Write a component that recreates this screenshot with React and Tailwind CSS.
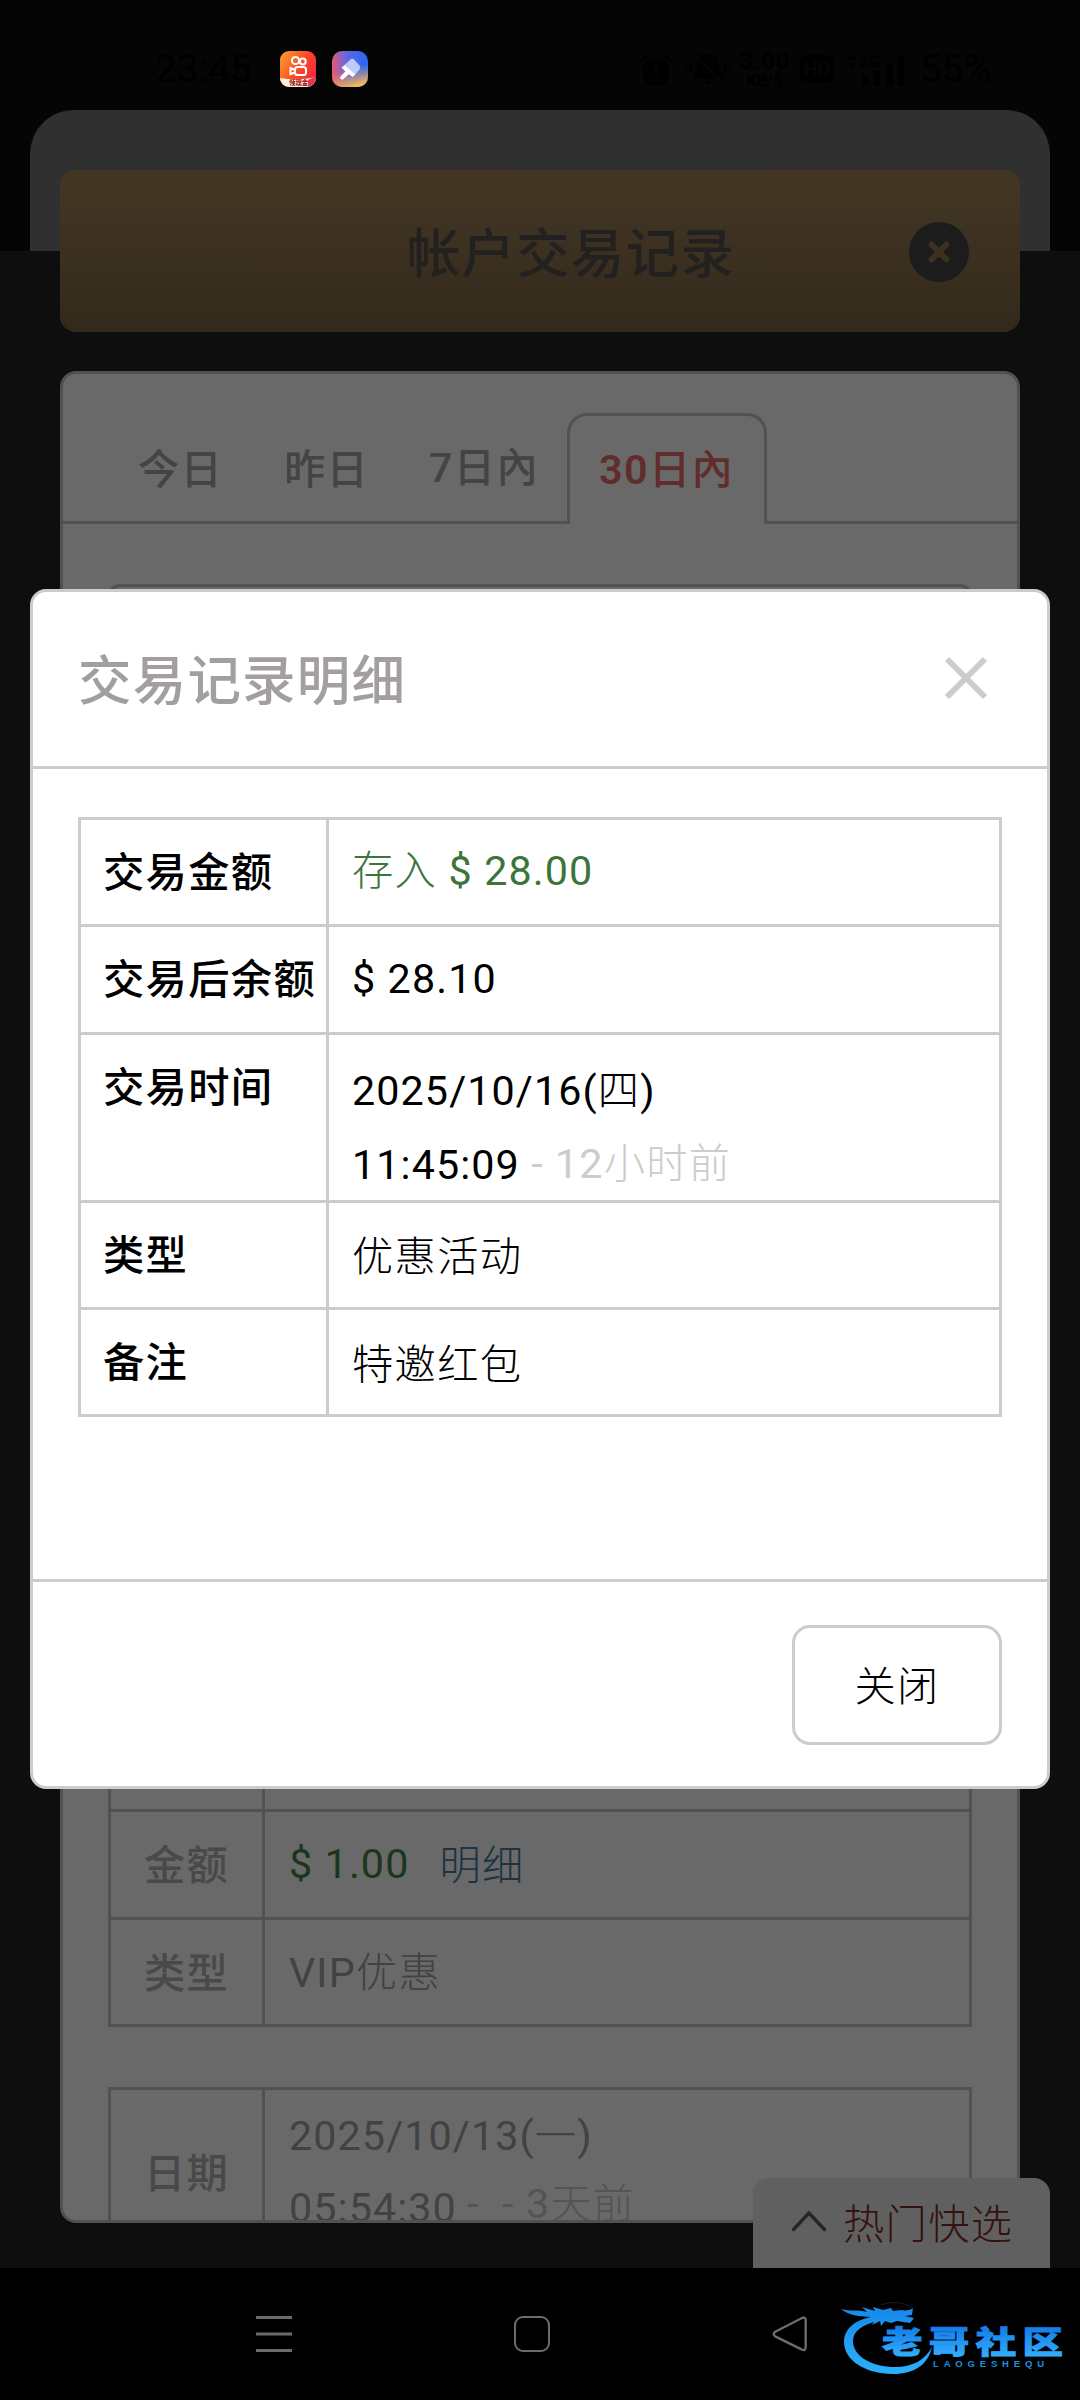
import React from 'react';

const Thin = ({ children }) => (
  <span className="font-['Noto_Sans_CJK_SC',sans-serif] font-light tracking-[1.375px]">{children}</span>
);

const StatusBar = () => (
  <div className="relative h-[170px] shrink-0 flex items-start pl-[155px] pr-[88px] pt-[50px] text-black">
    <div className="w-[125px] h-[38px] flex items-center text-[38px] leading-none tracking-[0.5px]">23:45</div>

    {/* Notification icons */}
    <div className="flex gap-4">
      <svg className="w-9 h-[37px]" viewBox="0 0 36 37">
        <defs>
          <linearGradient id="kwai" x1="0" y1="0" x2="1" y2="0.6">
            <stop offset="0" stopColor="#ffa22e" />
            <stop offset="0.6" stopColor="#fb4a24" />
            <stop offset="1" stopColor="#f4283c" />
          </linearGradient>
          <clipPath id="kwaiClip">
            <rect y="1" width="36" height="36" rx="9" />
          </clipPath>
        </defs>
        <g clipPath="url(#kwaiClip)">
          <rect y="1" width="36" height="36" fill="url(#kwai)" />
          <path d="M0 28 Q18 31 36 27 V37 H0Z" fill="#fff0e2" />
          <path d="M28 30 L36 26 V37 H28Z" fill="#e23a4a" />
          <g fill="none" stroke="#fff" strokeWidth="2">
            <circle cx="15.5" cy="10.5" r="3.6" />
            <circle cx="22.8" cy="11.5" r="2.9" />
            <rect x="15" y="17" width="11" height="8" rx="2.6" />
            <path d="M15 20 L10.5 18 V24 L15 22.5" />
          </g>
          <text x="9" y="35.3" fontSize="6.4" fontWeight="900" fill="#a31d16" fontFamily="Noto Sans CJK SC">领现金</text>
        </g>
      </svg>
      <svg className="w-9 h-[37px]" viewBox="0 0 36 37">
        <defs>
          <linearGradient id="brushBg" x1="0" y1="0.3" x2="1" y2="0.2">
            <stop offset="0" stopColor="#e25a7c" />
            <stop offset="0.45" stopColor="#5a68e6" />
            <stop offset="1" stopColor="#2468f5" />
          </linearGradient>
          <linearGradient id="brushGlow" x1="0.4" y1="0.35" x2="0.6" y2="1">
            <stop offset="0.25" stopColor="#f0a050" stopOpacity="0" />
            <stop offset="1" stopColor="#f2bd55" />
          </linearGradient>
        </defs>
        <rect y="1" width="36" height="36" rx="10" fill="url(#brushBg)" />
        <rect y="1" width="36" height="36" rx="10" fill="url(#brushGlow)" />
        <path d="M12.5 15 L18.5 9.5 Q20.5 8 22.5 10 L27.5 15.5 Q29 17.5 27.5 19.5 L23 25Z" fill="#b9ccfc" />
        <path d="M9.5 17.5 L12.8 15 L23.2 24.6 L20.8 27 L16.8 24.2 L11.5 29 Q9 30.5 8.2 28 Q8 26.8 9 26 L13.3 21.6Z" fill="#fff" />
      </svg>
    </div>

    <div className="ml-auto flex items-center h-[38px] text-black">
      <svg className="w-8 h-9" viewBox="0 0 32 36">
        <circle cx="16" cy="21" r="14" fill="#000" />
        <path d="M2 9 L8 4 M30 9 L24 4" stroke="#000" strokeWidth="3" />
        <path d="M16 14 V22 L20 24" fill="none" stroke="#050505" strokeWidth="2.5" />
      </svg>
      <svg className="ml-3 w-12 h-9" viewBox="0 0 48 36">
        <path d="M24 2 C15 4 13 10 13 17 L9 28 H39 L35 17 C35 10 33 4 24 2Z M20 30 H28 L24 34Z" fill="#000" />
        <path d="M7 12 V22 M2 14 V20 M41 12 V22 M46 14 V20" stroke="#000" strokeWidth="2.5" />
        <path d="M9 3 L39 32" stroke="#050505" strokeWidth="3" />
        <path d="M12 2 L41 30" stroke="#000" strokeWidth="2.5" />
      </svg>
      <div className="ml-2 w-[50px] flex flex-col items-center font-bold">
        <span className="text-[24px] leading-[24px] tracking-[0.5px]">3.00</span>
        <span className="text-[16px] leading-[16px]">KB/S</span>
      </div>
      <div className="ml-2.5 w-[34px] h-7 rounded-md bg-black text-[#050505] text-[20px] font-bold flex items-center justify-center">HD</div>
      <svg className="ml-3 w-[60px] h-9" viewBox="0 0 60 36">
        <text x="13" y="16" fontSize="17" fontWeight="700" fontFamily="Roboto">5G</text>
        <path d="M0 9 L5 3 L10 9Z M0 12 L5 18 L10 12Z" />
        <path d="M16 24 H22 V35 H16Z M27 19 H34 V35 H27Z M40 12 H47 V35 H40Z M52 4 H58 V35 H52Z" />
      </svg>
      <span className="ml-3.5 text-[38px] leading-none tracking-[0.5px]">55%</span>
    </div>
  </div>
);

const Banner = () => (
  <div className="relative mx-[60px] h-[162px] shrink-0 rounded-2xl bg-linear-to-b from-[#433724] via-[#3c3121] to-[#33291a] flex items-center justify-center">
    <h1 className="pl-[62px] pt-[7px] text-[53.5px] leading-none tracking-[1.2px] font-medium text-[#222120]">帐户交易记录</h1>
    <div className="absolute right-[51px] top-[52px] size-[60px] rounded-full bg-[#1c1c1c] flex items-center justify-center">
      <svg className="size-[24px]" viewBox="0 0 24 24" stroke="#3c3121" strokeWidth="6" strokeLinecap="round">
        <path d="M4.5 4.5 L19.5 19.5 M19.5 4.5 L4.5 19.5" />
      </svg>
    </div>
  </div>
);

const Tabs = () => (
  <div className="h-[150px] shrink-0 flex items-end text-[41.25px] leading-none tracking-[1.375px] font-medium text-[#444]">
    <div className="w-[45px] h-[111px] border-b-3 border-[#515151]" />
    <div className="w-[146px] h-[111px] border-b-3 border-[#515151] pl-[30px] pt-[37px]">今日</div>
    <div className="w-[146px] h-[111px] border-b-3 border-[#515151] pl-[30px] pt-[37px]">昨日</div>
    <div className="w-[167px] h-[111px] border-b-3 border-[#515151] pl-[29px] pt-[35px] whitespace-nowrap">7日內</div>
    <div className="w-[200px] h-[111px] border-x-3 border-t-3 border-[#515151] rounded-t-[20px] pl-[29px] pt-[34px] text-[#602d2c] whitespace-nowrap">
      <span className="font-semibold">30</span>日內
    </div>
    <div className="flex-1 h-[111px] border-b-3 border-[#515151]" />
  </div>
);

const RecordRow = ({ label, children, className }) => (
  <div className={`flex border-b-3 border-[#515151] ${className}`}>
    <div className="w-[154px] border-r-3 border-[#515151] pt-[5px] flex items-center justify-center font-medium text-[#494949]">{label}</div>
    <div className="flex-1 flex items-center pl-[24px] tracking-[1.1px] text-[#424242] whitespace-pre">{children}</div>
  </div>
);

const HistoryCard = () => (
  <div className="relative mx-[60px] mt-[39px] h-[1852px] shrink-0 rounded-2xl border-3 border-[#515151] bg-[#696969] overflow-hidden flex flex-col">
    <Tabs />
    <div className="mx-[45px] mt-[60px] h-[107px] shrink-0 rounded-xl border-3 border-[#515151]" />
    <div className="mx-[45px] mt-[951px] shrink-0 border-3 border-b-0 border-[#515151] text-[41.25px] leading-none tracking-[1.375px]">
      <RecordRow label="日期" className="h-[167px]" />
      <RecordRow label="金额" className="h-[108px]">
        <span className="pt-px text-[#1b361b]">$ 1.00</span>
        <span className="ml-[30px] pt-px text-[#1d3341]"><Thin>明细</Thin></span>
      </RecordRow>
      <RecordRow label="类型" className="h-[107px]">
        <span>VIP<Thin>优惠</Thin></span>
      </RecordRow>
    </div>
    <div className="mx-[45px] mt-[60px] shrink-0 border-3 border-b-0 border-[#515151] text-[41.25px] tracking-[1.375px]">
      <RecordRow label="日期" className="h-[167px]">
        <div className="mb-[9px] leading-[72px]">
          <div className="h-[72px]">2025/10/13(<Thin>一</Thin>)</div>
          <div className="h-[72px]">
            05:54:30<span className="relative -top-[4px] ml-[10px] text-[#545454]">-  - 3<Thin>天前</Thin></span>
          </div>
        </div>
      </RecordRow>
    </div>
  </div>
);

const QuickPick = () => (
  <div className="absolute right-[30px] bottom-[132px] w-[297px] h-[90px] rounded-t-2xl bg-[#606060] flex items-center pl-[38px]">
    <svg className="w-9 h-[22px] -mt-1" viewBox="0 0 36 22" fill="none" stroke="#262626" strokeWidth="3.4" strokeLinecap="round">
      <path d="M2.5 19.5 L18 3 L33.5 19.5" />
    </svg>
    <span className="ml-4 pt-[2px] text-[41.25px] leading-none text-[#371010]"><Thin>热门快选</Thin></span>
  </div>
);

const DetailRow = ({ label, children, className, valueClass }) => (
  <div className={`flex border-b-3 border-[#ccc] last:border-b-0 ${className}`}>
    <div className="w-[248px] border-r-3 border-[#ccc] pl-[22px] pt-[33px] font-medium whitespace-nowrap">{label}</div>
    <div className={`flex-1 pl-[23px] tracking-[1.1px] whitespace-pre ${valueClass}`}>{children}</div>
  </div>
);

const DetailModal = () => (
  <div className="absolute left-[30px] top-[589px] w-[1020px] h-[1200px] rounded-2xl border-3 border-[#ccc] bg-white flex flex-col">
    <div className="h-[177px] shrink-0 border-b-3 border-[#ccc] flex items-center justify-between pl-[45px] pr-[59px]">
      <h2 className="pt-[5px] text-[53.5px] leading-none tracking-[1.2px] font-medium text-[#a39f9f]">交易记录明细</h2>
      <svg className="size-[44px] -mt-[2px]" viewBox="0 0 44 44" stroke="#ccc" strokeWidth="6">
        <path d="M3 3 L41 41 M41 3 L3 41" />
      </svg>
    </div>

    <div className="flex-1 px-[45px] pt-[48px]">
      <div className="border-3 border-[#ccc] text-[41.25px] leading-none tracking-[1.375px] text-black">
        <DetailRow label="交易金额" className="h-[107px]" valueClass="pt-[27px]">
          <span className="text-[#3c743c]"><Thin>存入</Thin> $ 28.00</span>
        </DetailRow>
        <DetailRow label="交易后余额" className="h-[108px]" valueClass="pt-[32px]">$ 28.10</DetailRow>
        <DetailRow label="交易时间" className="h-[168px]" valueClass="pt-[16px] leading-[73px]">
          <div className="h-[74px]">2025/10/16(<Thin>四</Thin>)</div>
          <div className="h-[73px]">11:45:09<span className="relative -top-px text-[#ccc]"> - 12<Thin>小时前</Thin></span></div>
        </DetailRow>
        <DetailRow label="类型" className="h-[107px]" valueClass="pt-[30px]"><Thin>优惠活动</Thin></DetailRow>
        <DetailRow label="备注" className="h-[104px]" valueClass="pt-[31px]"><Thin>特邀红包</Thin></DetailRow>
      </div>
    </div>

    <div className="h-[207px] shrink-0 border-t-3 border-[#ccc] flex justify-end pt-[43px] pr-[45px]">
      <button className="w-[210px] h-[120px] pt-[2px] rounded-[18px] border-3 border-[#ccc] text-[41.25px] leading-none text-black">
        <Thin>关闭</Thin>
      </button>
    </div>
  </div>
);

const Logo = () => (
  <svg className="w-[240px] h-[100px]" viewBox="0 0 240 100">
    <defs>
      <linearGradient id="water" gradientUnits="userSpaceOnUse" x1="0" y1="15" x2="0" y2="85">
        <stop offset="0" stopColor="#1687ea" />
        <stop offset="1" stopColor="#2cb0fb" />
      </linearGradient>
      <linearGradient id="glyph" x1="0" y1="0" x2="0" y2="1">
        <stop offset="0.2" stopColor="#1279e8" />
        <stop offset="1" stopColor="#35b6ff" />
      </linearGradient>
    </defs>
    {/* Dragon body and head */}
    <g fill="url(#water)">
      <path d="M41 26 C20 29 9 39 9 52 C9 70 30 84 58 84 C79 84 93 75 97 57 C90 70 78 77 60 77 C38 77 18 67 18 51 C18 41 28 34 44 31Z" />
      <path d="M6 19 C16 22 23 19 32 22 L27 17 L40 21 L38 17 L48 20 L56 18 L58 21 L66 20 C71 21 76 20 78 18 L77 25 L70 26 L79 28 L75 33 L62 31 L56 33 L50 31 L46 36 L45 31 L37 35 L40 30 L30 33 L36 27 C24 26 14 26 6 19Z" />
    </g>
    <path d="M46 15 C56 11 70 12 77 18" fill="none" stroke="#0a2238" strokeWidth="1" />
    <text
      transform="translate(47 62.5) scale(1.35 1.03)"
      fontSize="30"
      fontWeight="900"
      letterSpacing="4.7"
      fontFamily="Noto Sans CJK SC"
      fill="url(#glyph)"
      stroke="url(#glyph)"
      strokeWidth="0.9"
    >
      老哥社区
    </text>
    <text x="98" y="76.8" fontSize="9.5" fontWeight="700" textLength="111" fontFamily="Liberation Sans" fill="#1d8fe0">LAOGESHEQU</text>
  </svg>
);

const NavBar = () => (
  <div className="mt-auto h-[132px] shrink-0 bg-black flex items-start pl-[256px]">
    <svg className="mt-[48px] w-9 h-9" viewBox="0 0 36 36" stroke="#6c6c6c" strokeWidth="3">
      <path d="M0 1.5 H36 M0 18 H36 M0 34.5 H36" />
    </svg>
    <div className="mt-[48px] ml-[222px] w-9 h-9 rounded-[9px] border-[2.5px] border-[#6c6c6c]" />
    <svg className="mt-[48px] ml-[222px] w-9 h-9" viewBox="0 0 36 36" fill="none" stroke="#6c6c6c" strokeWidth="2.4">
      <path d="M3.2 15.8 L30 2 Q33.5 0.8 33.7 4 V31 Q33.5 35 30 33.6 L3.2 20.4 Q0.2 18 3.2 15.8Z" />
    </svg>
    <div className="mt-[22px] ml-[27px]"><Logo /></div>
  </div>
);

export default function App() {
  return (
    <div className="relative w-[1080px] h-[2400px] bg-[#0e0e0e] overflow-hidden flex flex-col font-['Roboto','Noto_Sans_CJK_SC',sans-serif]">
      {/* Page backdrop behind the status bar and the banner */}
      <div className="absolute inset-x-0 top-0 h-[251px] bg-[#050505] px-[30px] pt-[110px] flex">
        <div className="flex-1 rounded-t-[44px] bg-[#303030]" />
      </div>
      <StatusBar />
      <Banner />
      <HistoryCard />
      <NavBar />
      <QuickPick />
      <DetailModal />
    </div>
  );
}
